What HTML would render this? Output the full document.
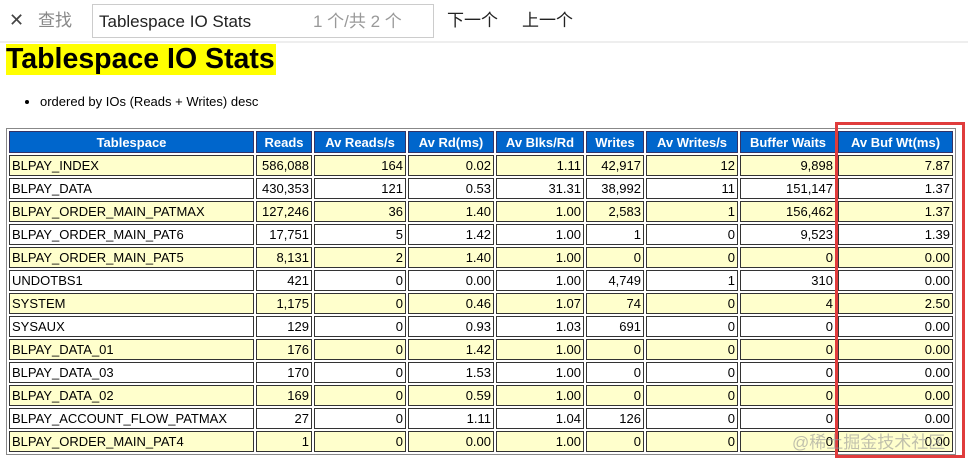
<!DOCTYPE html>
<html><head><meta charset="utf-8"><style>
body{margin:0;width:968px;height:462px;overflow:hidden;background:#fff;font-family:"Liberation Sans","Noto Sans CJK SC",sans-serif;position:relative}
.bar{position:absolute;left:0;top:0;width:968px;height:41px;border-bottom:2px solid #eee;background:#fff}
.bar span{position:absolute;top:12px;font-size:17px;color:#222;line-height:20px}
.box{position:absolute;left:92px;top:4px;width:340px;height:32px;border:1px solid #ccc}
h1{position:absolute;left:6px;top:44px;margin:0;font-size:28.5px;font-weight:bold;background:#ff0;line-height:31px;padding:0 1px 0 0}
ul{position:absolute;left:0;top:94px;margin:0;padding-left:40px;font-size:13px}
table{position:absolute;left:6px;top:128px;border:1px solid #888;border-spacing:2px;table-layout:fixed;font-size:13px}
td,th{border:1px solid #333;height:19px;padding:0 2px;white-space:nowrap}
th{background:#0066cc;color:#fff;font-weight:bold;border-color:#336;height:20px}
td{text-align:right}
td:first-child{text-align:left}
tr.y td{background:#ffffcc}
.red{position:absolute;left:835px;top:122px;width:124px;height:330px;border:3px solid #e03c3c}
.wm{position:absolute;left:792px;top:428px;font-size:17px;color:rgba(150,150,150,.6)}
</style></head><body>
<div class="bar">
<span style="left:9px;font-size:18px;color:#444;top:10px">✕</span>
<span style="left:38px;color:#888;top:11px">查找</span>
<div class="box"></div>
<span style="left:99px">Tablespace IO Stats</span>
<span style="left:313px;color:#999">1 个/共 2 个</span>
<span style="left:447px;top:11px">下一个</span>
<span style="left:522px;top:11px">上一个</span>
</div>
<h1>Tablespace IO Stats</h1>
<ul><li>ordered by IOs (Reads + Writes) desc</li></ul>
<table>
<colgroup><col style="width:245px"><col style="width:56px"><col style="width:92px"><col style="width:86px"><col style="width:88px"><col style="width:58px"><col style="width:92px"><col style="width:96px"><col style="width:115px"></colgroup>
<tr><th>Tablespace</th><th>Reads</th><th>Av Reads/s</th><th>Av Rd(ms)</th><th>Av Blks/Rd</th><th>Writes</th><th>Av Writes/s</th><th>Buffer Waits</th><th>Av Buf Wt(ms)</th></tr>
<tr class="y"><td>BLPAY_INDEX</td><td>586,088</td><td>164</td><td>0.02</td><td>1.11</td><td>42,917</td><td>12</td><td>9,898</td><td>7.87</td></tr>
<tr><td>BLPAY_DATA</td><td>430,353</td><td>121</td><td>0.53</td><td>31.31</td><td>38,992</td><td>11</td><td>151,147</td><td>1.37</td></tr>
<tr class="y"><td>BLPAY_ORDER_MAIN_PATMAX</td><td>127,246</td><td>36</td><td>1.40</td><td>1.00</td><td>2,583</td><td>1</td><td>156,462</td><td>1.37</td></tr>
<tr><td>BLPAY_ORDER_MAIN_PAT6</td><td>17,751</td><td>5</td><td>1.42</td><td>1.00</td><td>1</td><td>0</td><td>9,523</td><td>1.39</td></tr>
<tr class="y"><td>BLPAY_ORDER_MAIN_PAT5</td><td>8,131</td><td>2</td><td>1.40</td><td>1.00</td><td>0</td><td>0</td><td>0</td><td>0.00</td></tr>
<tr><td>UNDOTBS1</td><td>421</td><td>0</td><td>0.00</td><td>1.00</td><td>4,749</td><td>1</td><td>310</td><td>0.00</td></tr>
<tr class="y"><td>SYSTEM</td><td>1,175</td><td>0</td><td>0.46</td><td>1.07</td><td>74</td><td>0</td><td>4</td><td>2.50</td></tr>
<tr><td>SYSAUX</td><td>129</td><td>0</td><td>0.93</td><td>1.03</td><td>691</td><td>0</td><td>0</td><td>0.00</td></tr>
<tr class="y"><td>BLPAY_DATA_01</td><td>176</td><td>0</td><td>1.42</td><td>1.00</td><td>0</td><td>0</td><td>0</td><td>0.00</td></tr>
<tr><td>BLPAY_DATA_03</td><td>170</td><td>0</td><td>1.53</td><td>1.00</td><td>0</td><td>0</td><td>0</td><td>0.00</td></tr>
<tr class="y"><td>BLPAY_DATA_02</td><td>169</td><td>0</td><td>0.59</td><td>1.00</td><td>0</td><td>0</td><td>0</td><td>0.00</td></tr>
<tr><td>BLPAY_ACCOUNT_FLOW_PATMAX</td><td>27</td><td>0</td><td>1.11</td><td>1.04</td><td>126</td><td>0</td><td>0</td><td>0.00</td></tr>
<tr class="y"><td>BLPAY_ORDER_MAIN_PAT4</td><td>1</td><td>0</td><td>0.00</td><td>1.00</td><td>0</td><td>0</td><td>0</td><td>0.00</td></tr>
</table>
<div class="red"></div>
<div class="wm">@稀土掘金技术社区</div>
</body></html>
